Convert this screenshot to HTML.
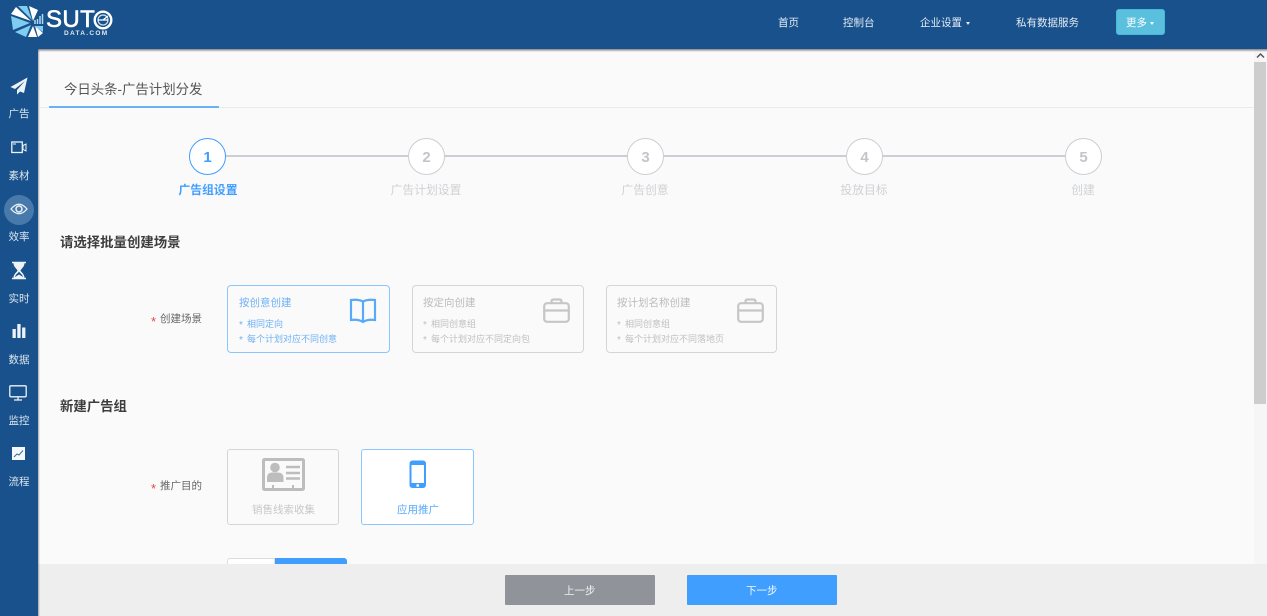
<!DOCTYPE html>
<html lang="zh-CN">
<head>
<meta charset="utf-8">
<title>今日头条-广告计划分发</title>
<style>
html,body{margin:0;padding:0;width:1267px;height:616px;overflow:hidden;background:#fff}
body{position:relative;font-family:"Liberation Sans","Noto Sans CJK SC",sans-serif;color:#555}
#wrap{left:0;top:0;width:1267px;height:616px;overflow:hidden;filter:blur(.3px)}
div,span,svg{position:absolute;box-sizing:border-box}
.t{white-space:nowrap;line-height:1}
#top{left:0;top:0;width:1267px;height:49px;background:#18518b}
#side{left:0;top:49px;width:38px;height:567px;background:#18518b}
#main{left:38px;top:49px;width:1229px;height:567px;background:#fafafa}
.nav{color:#e6edf4;font-size:10.5px;top:18px}
.sl{color:#dbe5ef;font-size:10.5px;left:8px;width:22px;text-align:center}
.circle{width:37px;height:37px;border-radius:50%;border:1.5px solid #ccced3;background:#fff;top:138px;color:#c3c5cb;font-size:15px;font-weight:bold;text-align:center;line-height:37px}
.sn{color:#cfd1d5;font-size:11.8px;top:185px;width:120px;text-align:center}
.sec{color:#3d3d3d;font-size:13.4px;font-weight:bold;left:60px}
.lab{font-size:10.5px;color:#666}
.req{color:#e8483f;font-size:13px}
.card{top:285px;height:68px;border:1px solid #d5d5d5;border-radius:4px;background:#fafafa}
.ct{font-size:10.5px;color:#bcbcbc}
.cs{font-size:9px;color:#c0c0c0}
</style>
</head>
<body>
<div id="wrap">
<div id="main"></div>

<!-- top bar -->
<div id="top"></div>
<svg style="left:10px;top:5px" width="35" height="33" viewBox="0 0 35 33">
<path d="M1 9 L6 2 L21 16 Z" fill="#fff"/>
<path d="M8 1 L17 1 L22 15 Z" fill="#7fcdf0"/>
<path d="M19 1 L28 5 L23 16 Z" fill="#fff"/>
<path d="M1 11 L20 18 L3 25 Z" fill="#7fcdf0"/>
<path d="M5 27 L21 20 L16 32 Z" fill="#7fcdf0"/>
<path d="M18 32 L23 21 L27 32 Z" fill="#fff"/>
<path d="M25 21 L33 28 L28 32 Z" fill="#fff"/>
<path d="M24 21 L33 21 L33 27 Z" fill="#7fcdf0"/>
<path d="M25 19 V15 M27.500 19 V14 M30 19 V11 M32.500 19 V9" stroke="#a9dcf3" stroke-width="1.500"/>
</svg>
<div class="t" style="left:46px;top:8px;color:#fff;font-size:24px;letter-spacing:.4px;font-family:'Liberation Sans',sans-serif;-webkit-text-stroke:.6px #fff">SUT</div>
<svg style="left:93px;top:10px" width="20" height="20" viewBox="0 0 20 20">
<circle cx="10" cy="10" r="8.300" fill="none" stroke="#fff" stroke-width="2.400"/>
<circle cx="10" cy="10" r="5" fill="none" stroke="#cfe2ee" stroke-width="1.200"/>
<path d="M10 10 L15 6 M5 10 H15" stroke="#fff" stroke-width="1.200"/>
</svg>
<div class="t" style="left:64px;top:31px;color:#dfe9f2;font-size:6.500px;font-weight:bold;letter-spacing:1.300px">DATA.COM</div>

<div class="t nav" style="left:778px">首页</div>
<div class="t nav" style="left:843px">控制台</div>
<div class="t nav" style="left:920px">企业设置</div>
<div style="left:966px;top:22px;width:0;height:0;border-left:2.500px solid transparent;border-right:2.500px solid transparent;border-top:3px solid #e6edf4"></div>
<div class="t nav" style="left:1016px">私有数据服务</div>
<div style="left:1116px;top:9px;width:49px;height:26px;background:#5bc0de;border:1px solid #46b8da;border-radius:3px"></div>
<div class="t nav" style="left:1126px;color:#fff">更多</div>
<div style="left:1150px;top:22px;width:0;height:0;border-left:2.500px solid transparent;border-right:2.500px solid transparent;border-top:3px solid #fff"></div>

<!-- sidebar -->
<div id="side"></div>
<svg style="left:10px;top:77px" width="18" height="18" viewBox="0 0 18 18"><path d="M17.500 .5 L0.500 10 L5 12 L15 4 L7 13 L7 17.500 L10 14.500 L14 16 Z" fill="#eef3f8"/></svg>
<div class="t sl" style="top:109px">广告</div>
<svg style="left:11px;top:141px" width="16" height="13" viewBox="0 0 16 13"><rect x=".8" y="1" width="10.500" height="10.500" fill="none" stroke="#eef3f8" stroke-width="1.300"/><path d="M2 3 H5" stroke="#eef3f8"/><path d="M12 4.500 L15 3 V10 L12 8.500 Z" fill="none" stroke="#eef3f8"/></svg>
<div class="t sl" style="top:171px">素材</div>
<div style="left:4px;top:195px;width:30px;height:30px;border-radius:50%;background:#477aaa"></div>
<svg style="left:10px;top:202px" width="18" height="14" viewBox="0 0 18 14"><path d="M1 7 Q9 -2.500 17 7 Q9 16.500 1 7 Z" fill="none" stroke="#eef3f8" stroke-width="1.300"/><circle cx="9" cy="7" r="3" fill="none" stroke="#eef3f8" stroke-width="1.500"/></svg>
<div class="t sl" style="top:232px">效率</div>
<svg style="left:11px;top:261px" width="16" height="19" viewBox="0 0 16 19"><path d="M1 .8 H15 V2.300 H13.500 C13.500 6 10 8 9.500 9.500 C10 11 13.500 13 13.500 16.700 H15 V18.200 H1 V16.700 H2.500 C2.500 13 6 11 6.500 9.500 C6 8 2.500 6 2.500 2.300 H1 Z" fill="#eef3f8"/><path d="M8 10.500 C7.300 12 4.500 13.500 4 16 L8 13.500 L12 16 C11.500 13.500 8.700 12 8 10.500 Z" fill="#18518b"/></svg>
<div class="t sl" style="top:294px">实时</div>
<svg style="left:12px;top:323px" width="14" height="15" viewBox="0 0 14 15"><rect x=".5" y="6" width="3.300" height="9" fill="#eef3f8"/><rect x="5.300" y="1" width="3.300" height="14" fill="#eef3f8"/><rect x="10.100" y="4.500" width="3.300" height="10.500" fill="#eef3f8"/></svg>
<div class="t sl" style="top:355px">数据</div>
<svg style="left:9px;top:385px" width="18" height="16" viewBox="0 0 18 16"><rect x=".8" y=".8" width="16.400" height="11" rx="1" fill="none" stroke="#eef3f8" stroke-width="1.300"/><path d="M9 12 V14.500 M5 15 H13" stroke="#eef3f8" stroke-width="1.300"/></svg>
<div class="t sl" style="top:416px">监控</div>
<svg style="left:12px;top:447px" width="13" height="13" viewBox="0 0 13 13"><rect width="13" height="13" fill="#f4f7fa"/><path d="M2 10 L5 7 L7 8 L11 3.500" fill="none" stroke="#3a6b9c" stroke-width="1"/></svg>
<div class="t sl" style="top:477px">流程</div>

<!-- tab header -->
<div style="left:40px;top:107px;width:1214px;height:1px;background:#eaeaea"></div>
<div style="left:49px;top:106px;width:170px;height:2px;background:#6cb1f5"></div>
<div class="t" style="left:64px;top:83px;font-size:13.400px;color:#555">今日头条-广告计划分发</div>

<!-- steps -->
<div style="left:208px;top:155px;width:875px;height:1.500px;background:#cdced3"></div>
<div class="circle" style="left:189px;border-color:#409eff;color:#409eff">1</div>
<div class="circle" style="left:408px">2</div>
<div class="circle" style="left:627px">3</div>
<div class="circle" style="left:846px">4</div>
<div class="circle" style="left:1065px">5</div>
<div class="t sn" style="left:148px;color:#409eff;font-weight:bold">广告组设置</div>
<div class="t sn" style="left:366px">广告计划设置</div>
<div class="t sn" style="left:585px">广告创意</div>
<div class="t sn" style="left:804px">投放目标</div>
<div class="t sn" style="left:1023px">创建</div>

<!-- section 1 -->
<div class="t sec" style="top:236px">请选择批量创建场景</div>
<div class="t req" style="left:151px;top:315px">*</div>
<div class="t lab" style="left:160px;top:314px">创建场景</div>

<div class="card" style="left:227px;width:163px;border-color:#8cc5ff"></div>
<div class="t ct" style="left:239px;top:298px;color:#6fb1f5">按创意创建</div>
<div class="t cs" style="left:239px;top:321px;color:#6fb1f5;font-size:10px">*</div>
<div class="t cs" style="left:247px;top:320px;color:#6fb1f5">相同定向</div>
<div class="t cs" style="left:239px;top:336px;color:#6fb1f5;font-size:10px">*</div>
<div class="t cs" style="left:247px;top:335px;color:#6fb1f5">每个计划对应不同创意</div>
<svg style="left:349px;top:298px" width="28" height="26" viewBox="0 0 28 26"><path d="M14 3.500 C11 2 6 1.500 2 2 V22 C6 21.500 11 22 14 24 C17 22 22 21.500 26 22 V2 C22 1.500 17 2 14 3.500 Z M14 3.500 V24" fill="none" stroke="#5aa9f8" stroke-width="2.200"/></svg>

<div class="card" style="left:412px;width:172px"></div>
<div class="t ct" style="left:423px;top:298px">按定向创建</div>
<div class="t cs" style="left:423px;top:321px;font-size:10px">*</div>
<div class="t cs" style="left:431px;top:320px">相同创意组</div>
<div class="t cs" style="left:423px;top:336px;font-size:10px">*</div>
<div class="t cs" style="left:431px;top:335px">每个计划对应不同定向包</div>
<svg style="left:543px;top:298px" width="27" height="26" viewBox="0 0 27 26"><rect x="1.200" y="5.200" width="24.600" height="18.600" rx="3" fill="none" stroke="#c6c6c6" stroke-width="2.200"/><path d="M1.500 12.500 H25.500 M8.500 5 V3.500 Q8.500 1.500 10.500 1.500 H16.500 Q18.500 1.500 18.500 3.500 V5" fill="none" stroke="#c6c6c6" stroke-width="2.200"/></svg>

<div class="card" style="left:606px;width:171px"></div>
<div class="t ct" style="left:617px;top:298px">按计划名称创建</div>
<div class="t cs" style="left:617px;top:321px;font-size:10px">*</div>
<div class="t cs" style="left:625px;top:320px">相同创意组</div>
<div class="t cs" style="left:617px;top:336px;font-size:10px">*</div>
<div class="t cs" style="left:625px;top:335px">每个计划对应不同落地页</div>
<svg style="left:737px;top:298px" width="27" height="26" viewBox="0 0 27 26"><rect x="1.200" y="5.200" width="24.600" height="18.600" rx="3" fill="none" stroke="#c6c6c6" stroke-width="2.200"/><path d="M1.500 12.500 H25.500 M8.500 5 V3.500 Q8.500 1.500 10.500 1.500 H16.500 Q18.500 1.500 18.500 3.500 V5" fill="none" stroke="#c6c6c6" stroke-width="2.200"/></svg>

<!-- section 2 -->
<div class="t sec" style="top:400px">新建广告组</div>
<div class="t req" style="left:151px;top:482px">*</div>
<div class="t lab" style="left:160px;top:481px">推广目的</div>

<div style="left:227px;top:449px;width:112px;height:76px;border:1px solid #d5d5d5;border-radius:3px;background:#fafafa"></div>
<svg style="left:262px;top:458px" width="43" height="33" viewBox="0 0 43 33"><rect x="1.500" y="1.500" width="40" height="30" rx="1" fill="#fafafa" stroke="#bdbdbd" stroke-width="3"/><circle cx="13" cy="9.500" r="4.800" fill="#bdbdbd"/><path d="M5 24 V20 Q5 14.500 10.500 14.500 H15.500 Q21.500 14.500 21.500 20 V24 Z" fill="#bdbdbd"/><path d="M24 9 H38 M24 15 H38 M24 20.500 H38" stroke="#bdbdbd" stroke-width="2.400"/><path d="M11 31 V27 M31 31 V27" stroke="#bdbdbd" stroke-width="2"/></svg>
<div class="t" style="left:252px;top:505px;font-size:10.500px;color:#c8c8c8">销售线索收集</div>

<div style="left:361px;top:449px;width:113px;height:76px;border:1px solid #8cc5ff;border-radius:3px;background:#fff"></div>
<svg style="left:409px;top:460px" width="18" height="29" viewBox="0 0 18 29"><rect x=".5" y=".5" width="16.500" height="27.500" rx="3" fill="#409eff"/><rect x="2.500" y="5" width="12.500" height="18" fill="#fff"/><circle cx="8.700" cy="25.500" r="1.400" fill="#fff"/></svg>
<div class="t" style="left:397px;top:505px;font-size:10.500px;color:#5aa9f8">应用推广</div>

<div style="left:227px;top:558px;width:48px;height:8px;background:#fff;border:1px solid #ddd;border-radius:3px 0 0 0"></div>
<div style="left:275px;top:558px;width:72px;height:8px;background:#409eff;border-radius:0 3px 0 0"></div>

<!-- scrollbar -->
<div style="left:1254px;top:49px;width:13px;height:515px;background:#f6f6f6"></div>
<svg style="left:1256px;top:52px" width="9" height="7" viewBox="0 0 9 7"><path d="M1 5.500 L4.500 2 L8 5.500" fill="none" stroke="#555" stroke-width="1.500"/></svg>
<div style="left:1254px;top:62px;width:12px;height:342px;background:#cdcdcd"></div>

<!-- bottom bar -->
<div style="left:38px;top:564px;width:1229px;height:52px;background:#eeeeee"></div>
<div style="left:505px;top:575px;width:150px;height:30px;background:#909399;border-radius:1px"></div>
<div class="t" style="left:564px;top:586px;font-size:10.500px;color:#f2f2f2">上一步</div>
<div style="left:687px;top:575px;width:150px;height:30px;background:#409eff;border-radius:1px"></div>
<div class="t" style="left:746px;top:586px;font-size:10.500px;color:#f4f9ff">下一步</div>

<!-- edge shadows -->
<div style="left:38px;top:49px;width:1229px;height:3px;background:linear-gradient(to bottom,rgba(70,70,70,.65),rgba(70,70,70,0))"></div>
<div style="left:38px;top:49px;width:2px;height:567px;background:linear-gradient(to right,rgba(90,90,90,.5),rgba(90,90,90,0))"></div>
</div>
</body>
</html>
